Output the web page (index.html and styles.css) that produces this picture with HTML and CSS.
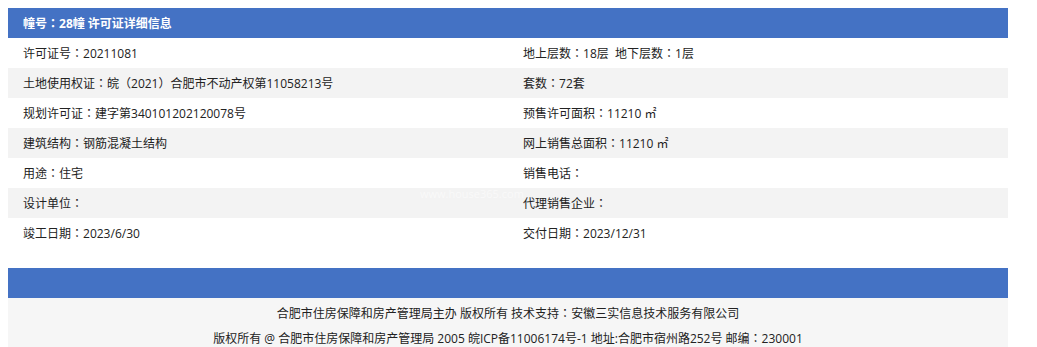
FILE: index.html
```html
<!DOCTYPE html>
<html>
<head>
<meta charset="utf-8">
<title>许可证详细信息</title>
<link rel="stylesheet" href="styles.css">
</head>
<body>
<div class="wrap">
  <div class="title">幢号<span class="c">：</span>28幢 许可证详细信息</div>
  <div class="grid">
    <div class="cell">许可证号<span class="c">：</span>20211081</div>
    <div class="cell">地上层数<span class="c">：</span>18层&nbsp;&nbsp;地下层数<span class="c">：</span>1层</div>
    <div class="cell alt">土地使用权证<span class="c">：</span>皖（2021）合肥市不动产权第11058213号</div>
    <div class="cell alt">套数<span class="c">：</span>72套</div>
    <div class="cell">规划许可证<span class="c">：</span>建字第340101202120078号</div>
    <div class="cell">预售许可面积<span class="c">：</span>11210 ㎡</div>
    <div class="cell alt">建筑结构<span class="c">：</span>钢筋混凝土结构</div>
    <div class="cell alt">网上销售总面积<span class="c">：</span>11210 ㎡</div>
    <div class="cell">用途<span class="c">：</span>住宅</div>
    <div class="cell">销售电话<span class="c">：</span></div>
    <div class="cell alt">设计单位<span class="c">：</span></div>
    <div class="cell alt">代理销售企业<span class="c">：</span></div>
    <div class="cell">竣工日期<span class="c">：</span>2023/6/30</div>
    <div class="cell">交付日期<span class="c">：</span>2023/12/31</div>
    <div class="watermark">www.house365.com</div>
  </div>
  <div class="footbar"></div>
  <div class="footer">
    <p>合肥市住房保障和房产管理局主办 版权所有 技术支持<span class="c">：</span>安徽三实信息技术服务有限公司</p>
    <p>版权所有 @ 合肥市住房保障和房产管理局 2005 皖ICP备11006174号-1 地址:合肥市宿州路252号 邮编<span class="c">：</span>230001</p>
  </div>
</div>
</body>
</html>
```

FILE: styles.css
```css
html, body {
  margin: 0;
  padding: 0;
  background: #ffffff;
}
body {
  padding: 8px;
  font-family: "Open Sans", "Noto Sans CJK SC", sans-serif;
  font-size: 12px;
  color: #222;
}
.c {
  font-family: "Noto Sans CJK TC", "Noto Sans CJK SC", sans-serif;
}
.wrap {
  width: 1000px;
}
.title {
  height: 30px;
  line-height: 30px;
  background: #4472c4;
  color: #ffffff;
  font-weight: bold;
  font-size: 12px;
  padding-left: 15px;
}
.grid {
  position: relative;
  display: grid;
  grid-template-columns: 500px 500px;
}
.cell {
  height: 30px;
  line-height: 30px;
  padding-left: 15px;
  white-space: nowrap;
}
.cell.alt {
  background: #f3f3f3;
}
.watermark {
  position: absolute;
  left: 412px;
  top: 148px;
  color: #ffffff;
  opacity: 0.55;
  font-size: 11px;
  pointer-events: none;
}
.footbar {
  margin-top: 20px;
  height: 30px;
  background: #4472c4;
}
.footer {
  background: #f6f6f6;
  text-align: center;
  padding-top: 4px;
}
.footer p {
  margin: 0;
  height: 25px;
  line-height: 22px;
}
```
